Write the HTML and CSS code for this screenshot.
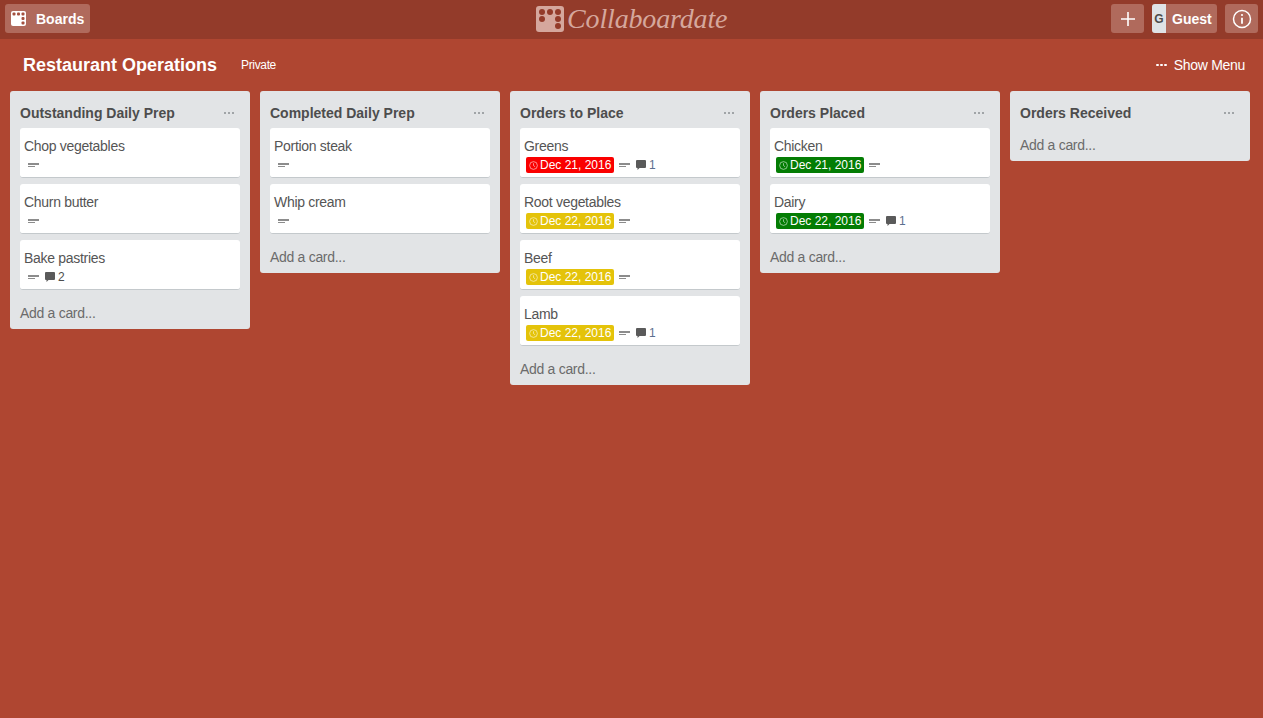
FILE: index.html
```html
<!DOCTYPE html>
<html lang="en">

<head>
    <meta charset="UTF-8">
    <title>Restaurant Operations</title>
    <link rel="stylesheet" href="styles.css">
</head>

<body>
    <header class="topbar">
        <a class="btn boards-btn">
            <svg class="boards-icon" width="15" height="15" viewBox="0 0 15 15">
                <rect width="15" height="15" rx="2" fill="#fff" />
                <rect x="1.500" y="1.500" width="3" height="3" rx="1" fill="#a4503f" />
                <rect x="6" y="1.500" width="3" height="3" rx="1" fill="#a4503f" />
                <rect x="10.500" y="1.500" width="3" height="3" rx="1" fill="#a4503f" />
                <rect x="10.500" y="6" width="3" height="3" rx="1" fill="#a4503f" />
                <rect x="10.500" y="10.500" width="3" height="3" rx="1" fill="#a4503f" />
            </svg>
            <span>Boards</span>
        </a>
        <div class="logo">
            <svg width="28" height="26" viewBox="0 0 28 26">
                <rect width="28" height="26" rx="3" fill="#d5a79d" />
                <circle cx="6" cy="6" r="3" fill="#933b2a" />
                <circle cx="14" cy="6" r="3" fill="#933b2a" />
                <circle cx="22" cy="6" r="3" fill="#933b2a" />
                <circle cx="6" cy="13" r="3" fill="#933b2a" />
                <circle cx="22" cy="13" r="3" fill="#933b2a" />
                <circle cx="22" cy="20" r="3" fill="#933b2a" />
            </svg>
            <span>Collaboardate</span>
        </div>
        <div class="topbar-right">
            <a class="btn square-btn">
                <svg width="16" height="16" viewBox="0 0 16 16">
                    <path d="M8 1v14M1 8h14" stroke="#fff" stroke-width="1.6" />
                </svg>
            </a>
            <a class="btn guest-btn">
                <span class="avatar">G</span>
                <span class="guest-name">Guest</span>
            </a>
            <a class="btn square-btn">
                <svg width="20" height="20" viewBox="0 0 20 20">
                    <circle cx="10" cy="10" r="8.500" fill="none" stroke="#fff" stroke-width="1.500" />
                    <circle cx="10" cy="6" r="1.100" fill="#fff" />
                    <path d="M10 8.800v6" stroke="#fff" stroke-width="1.800" />
                </svg>
            </a>
        </div>
    </header>

    <section class="board-header">
        <h1>Restaurant Operations</h1>
        <span class="private">Private</span>
        <span class="show-menu"><i class="dots white"><b></b><b></b><b></b></i>Show Menu</span>
    </section>

    <main class="board">
        <div class="list">
            <div class="list-head"><h2>Outstanding Daily Prep</h2><i class="dots"><b></b><b></b><b></b></i></div>
            <div class="card">
                <div class="card-title">Chop vegetables</div>
                <div class="badges"><i class="desc"></i></div>
            </div>
            <div class="card">
                <div class="card-title">Churn butter</div>
                <div class="badges"><i class="desc"></i></div>
            </div>
            <div class="card">
                <div class="card-title">Bake pastries</div>
                <div class="badges">
                    <i class="desc"></i>
                    <span class="comments plain"><svg class="bubble" viewBox="0 0 10 10"><path d="M1 0h8a1 1 0 0 1 1 1v6a1 1 0 0 1-1 1H3.500L1.500 10V8H1a1 1 0 0 1-1-1V1a1 1 0 0 1 1-1z" /></svg>2</span>
                </div>
            </div>
            <div class="add-card">Add a card...</div>
        </div>

        <div class="list">
            <div class="list-head"><h2>Completed Daily Prep</h2><i class="dots"><b></b><b></b><b></b></i></div>
            <div class="card">
                <div class="card-title">Portion steak</div>
                <div class="badges"><i class="desc"></i></div>
            </div>
            <div class="card">
                <div class="card-title">Whip cream</div>
                <div class="badges"><i class="desc"></i></div>
            </div>
            <div class="add-card">Add a card...</div>
        </div>

        <div class="list">
            <div class="list-head"><h2>Orders to Place</h2><i class="dots"><b></b><b></b><b></b></i></div>
            <div class="card">
                <div class="card-title">Greens</div>
                <div class="badges">
                    <span class="due red"><svg class="clock" viewBox="0 0 10 10"><circle cx="5" cy="5" r="4.300" /><path d="M5 2.500V5l1.800 1.500" /></svg>Dec 21, 2016</span>
                    <i class="desc"></i>
                    <span class="comments"><svg class="bubble" viewBox="0 0 10 10"><path d="M1 0h8a1 1 0 0 1 1 1v6a1 1 0 0 1-1 1H3.500L1.500 10V8H1a1 1 0 0 1-1-1V1a1 1 0 0 1 1-1z" /></svg>1</span>
                </div>
            </div>
            <div class="card">
                <div class="card-title">Root vegetables</div>
                <div class="badges">
                    <span class="due yellow"><svg class="clock" viewBox="0 0 10 10"><circle cx="5" cy="5" r="4.300" /><path d="M5 2.500V5l1.800 1.500" /></svg>Dec 22, 2016</span>
                    <i class="desc"></i>
                </div>
            </div>
            <div class="card">
                <div class="card-title">Beef</div>
                <div class="badges">
                    <span class="due yellow"><svg class="clock" viewBox="0 0 10 10"><circle cx="5" cy="5" r="4.300" /><path d="M5 2.500V5l1.800 1.500" /></svg>Dec 22, 2016</span>
                    <i class="desc"></i>
                </div>
            </div>
            <div class="card">
                <div class="card-title">Lamb</div>
                <div class="badges">
                    <span class="due yellow"><svg class="clock" viewBox="0 0 10 10"><circle cx="5" cy="5" r="4.300" /><path d="M5 2.500V5l1.800 1.500" /></svg>Dec 22, 2016</span>
                    <i class="desc"></i>
                    <span class="comments"><svg class="bubble" viewBox="0 0 10 10"><path d="M1 0h8a1 1 0 0 1 1 1v6a1 1 0 0 1-1 1H3.500L1.500 10V8H1a1 1 0 0 1-1-1V1a1 1 0 0 1 1-1z" /></svg>1</span>
                </div>
            </div>
            <div class="add-card">Add a card...</div>
        </div>

        <div class="list">
            <div class="list-head"><h2>Orders Placed</h2><i class="dots"><b></b><b></b><b></b></i></div>
            <div class="card">
                <div class="card-title">Chicken</div>
                <div class="badges">
                    <span class="due green"><svg class="clock" viewBox="0 0 10 10"><circle cx="5" cy="5" r="4.300" /><path d="M5 2.500V5l1.800 1.500" /></svg>Dec 21, 2016</span>
                    <i class="desc"></i>
                </div>
            </div>
            <div class="card">
                <div class="card-title">Dairy</div>
                <div class="badges">
                    <span class="due green"><svg class="clock" viewBox="0 0 10 10"><circle cx="5" cy="5" r="4.300" /><path d="M5 2.500V5l1.800 1.500" /></svg>Dec 22, 2016</span>
                    <i class="desc"></i>
                    <span class="comments"><svg class="bubble" viewBox="0 0 10 10"><path d="M1 0h8a1 1 0 0 1 1 1v6a1 1 0 0 1-1 1H3.500L1.500 10V8H1a1 1 0 0 1-1-1V1a1 1 0 0 1 1-1z" /></svg>1</span>
                </div>
            </div>
            <div class="add-card">Add a card...</div>
        </div>

        <div class="list">
            <div class="list-head"><h2>Orders Received</h2><i class="dots"><b></b><b></b><b></b></i></div>
            <div class="add-card">Add a card...</div>
        </div>
    </main>
</body>

</html>
```

FILE: styles.css
```css
* {
    box-sizing: border-box;
}

html,
body {
    height: 100%;
}

body {
    margin: 0;
    background-color: #af4631;
    color: #4d4d4d;
    font-family: "Liberation Sans", Arial, sans-serif;
    font-size: 14px;
    overflow: hidden;
}

/* top bar */
.topbar {
    height: 39px;
    padding: 4px 5px 0;
    background-color: #933b2a;
    display: flex;
    align-items: flex-start;
    position: relative;
}

.btn {
    height: 29px;
    border-radius: 3px;
    background-color: #b06a5c;
    color: #fff;
    font-weight: bold;
    display: flex;
    align-items: center;
}

.boards-btn {
    width: 85px;
    padding-left: 6px;
}

.boards-icon {
    margin-right: 10px;
}

.logo {
    position: absolute;
    left: 536px;
    top: 5px;
    display: flex;
    align-items: center;
    gap: 3px;
    color: #d5a79d;
    font-family: "Liberation Serif", serif;
    font-style: italic;
    font-size: 28px;
    line-height: 28px;
    letter-spacing: -0.15px;
}

.topbar-right {
    margin-left: auto;
    display: flex;
    gap: 8px;
}

.square-btn {
    width: 33px;
    justify-content: center;
}

.guest-btn {
    width: 65px;
    overflow: hidden;
}

.avatar {
    width: 14px;
    height: 100%;
    background-color: #dfe3e6;
    color: #4d4d4d;
    font-size: 12px;
    display: flex;
    align-items: center;
    justify-content: center;
}

.guest-name {
    margin-left: 6px;
}

/* board header */
.board-header {
    height: 52px;
    padding: 0 18px 0 23px;
    display: flex;
    align-items: center;
    color: #fff;
}

.board-header h1 {
    margin: 0;
    font-size: 18px;
    font-weight: bold;
}

.private {
    margin-left: 24px;
    font-size: 12px;
    letter-spacing: -0.35px;
}

.show-menu {
    margin-left: auto;
    display: flex;
    align-items: center;
    gap: 7px;
    letter-spacing: -0.3px;
}

.dots {
    display: flex;
    gap: 1.500px;
}

.dots b {
    width: 2.500px;
    height: 2.500px;
    border-radius: 50%;
    background-color: #8a8f92;
}

.dots.white b {
    background-color: #fff;
}

/* lists */
.board {
    padding: 0 10px;
    display: flex;
    align-items: flex-start;
    gap: 10px;
}

.list {
    width: 240px;
    padding: 0 10px;
    border-radius: 3px;
    background-color: #e2e4e6;
}

.list-head {
    height: 37px;
    padding: 14px 6px 7px 0;
    display: flex;
    align-items: center;
    justify-content: space-between;
}

.list-head h2 {
    margin: 0;
    font-size: 14px;
    font-weight: bold;
    color: #4d4d4d;
}

.card {
    height: 50px;
    margin-bottom: 6px;
    padding: 9px 4px 0;
    border-radius: 3px;
    background-color: #fff;
    border-bottom: 1px solid #c4c9cc;
}

.card-title {
    height: 18px;
    line-height: 18px;
    letter-spacing: -0.3px;
    color: #555;
}

.badges {
    height: 16px;
    padding-left: 4px;
    margin-top: 2px;
    display: flex;
    align-items: center;
    font-size: 12px;
}

.due {
    width: 88px;
    height: 16px;
    margin-right: 5px;
    margin-left: -2px;
    padding-left: 3px;
    border-radius: 2px;
    color: #fff;
    display: flex;
    align-items: center;
    gap: 2px;
    font-size: 12px;
    white-space: nowrap;
}

.clock {
    width: 9px;
    height: 9px;
    fill: none;
    stroke: rgba(255, 255, 255, 0.6);
    stroke-width: 1;
}

.red {
    background-color: #fa0000;
}

.yellow {
    background-color: #e4c30a;
}

.green {
    background-color: #047d04;
}

.desc {
    width: 11px;
    height: 5px;
    border-top: 2px solid #8c8c8c;
}

.desc::after {
    content: "";
    display: block;
    width: 7px;
    height: 1px;
    margin-top: 1px;
    background-color: #8c8c8c;
}

.comments {
    margin-left: 6px;
    display: flex;
    align-items: center;
    gap: 3px;
    color: #5b6f8f;
}

.comments.plain {
    color: #4d4d4d;
}

.bubble {
    width: 10px;
    height: 10px;
    fill: #5a5a5a;
}

.add-card {
    height: 33px;
    padding-top: 9px;
    line-height: 16px;
    color: #6b6b6b;
    letter-spacing: -0.3px;
}
```
